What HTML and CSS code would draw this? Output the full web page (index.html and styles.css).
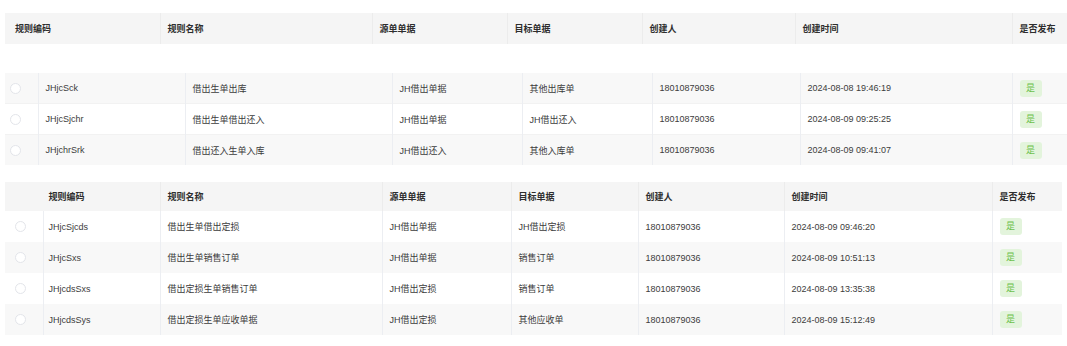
FILE: index.html
```html
<!DOCTYPE html>
<html lang="zh-CN">
<head>
<meta charset="utf-8">
<link rel="stylesheet" href="styles.css">
</head>
<body>
<div class="page">
  <table class="grid head1">
    <colgroup><col class="h1c1"><col class="h1c2"><col class="h1c3"><col class="h1c4"><col class="h1c5"><col class="h1c6"><col class="h1c7"></colgroup>
    <thead><tr><th class="first">规则编码</th><th>规则名称</th><th>源单单据</th><th>目标单据</th><th>创建人</th><th>创建时间</th><th>是否发布</th></tr></thead>
  </table>

  <table class="grid body1">
    <colgroup><col class="b1c0"><col class="b1c1"><col class="b1c2"><col class="b1c3"><col class="b1c4"><col class="b1c5"><col class="b1c6"><col class="b1c7"></colgroup>
    <tbody>
      <tr class="striped"><td class="sel"><span class="radio"></span></td><td>JHjcSck</td><td>借出生单出库</td><td>JH借出单据</td><td>其他出库单</td><td>18010879036</td><td>2024-08-08 19:46:19</td><td><span class="tag">是</span></td></tr>
      <tr><td class="sel"><span class="radio"></span></td><td>JHjcSjchr</td><td>借出生单借出还入</td><td>JH借出单据</td><td>JH借出还入</td><td>18010879036</td><td>2024-08-09 09:25:25</td><td><span class="tag">是</span></td></tr>
      <tr class="striped"><td class="sel"><span class="radio"></span></td><td>JHjchrSrk</td><td>借出还入生单入库</td><td>JH借出还入</td><td>其他入库单</td><td>18010879036</td><td>2024-08-09 09:41:07</td><td><span class="tag">是</span></td></tr>
    </tbody>
  </table>

  <table class="grid t2">
    <colgroup><col class="c0"><col class="c1"><col class="c2"><col class="c3"><col class="c4"><col class="c5"><col class="c6"><col class="c7"></colgroup>
    <thead><tr><th class="sel"></th><th>规则编码</th><th>规则名称</th><th>源单单据</th><th>目标单据</th><th>创建人</th><th>创建时间</th><th>是否发布</th></tr></thead>
    <tbody>
      <tr><td class="sel"><span class="radio"></span></td><td>JHjcSjcds</td><td>借出生单借出定损</td><td>JH借出单据</td><td>JH借出定损</td><td>18010879036</td><td>2024-08-09 09:46:20</td><td><span class="tag">是</span></td></tr>
      <tr class="striped"><td class="sel"><span class="radio"></span></td><td>JHjcSxs</td><td>借出生单销售订单</td><td>JH借出单据</td><td>销售订单</td><td>18010879036</td><td>2024-08-09 10:51:13</td><td><span class="tag">是</span></td></tr>
      <tr><td class="sel"><span class="radio"></span></td><td>JHjcdsSxs</td><td>借出定损生单销售订单</td><td>JH借出定损</td><td>销售订单</td><td>18010879036</td><td>2024-08-09 13:35:38</td><td><span class="tag">是</span></td></tr>
      <tr class="striped"><td class="sel"><span class="radio"></span></td><td>JHjcdsSys</td><td>借出定损生单应收单据</td><td>JH借出定损</td><td>其他应收单</td><td>18010879036</td><td>2024-08-09 15:12:49</td><td><span class="tag">是</span></td></tr>
    </tbody>
  </table>
</div>
</body>
</html>
```

FILE: styles.css
```css
html, body {
  margin: 0;
  padding: 0;
  background: #ffffff;
}

body {
  font-family: "Liberation Sans", "Noto Sans CJK SC", sans-serif;
  font-size: 9px;
  color: #3c3c3c;
}

.page {
  padding: 13px 0 0 5px;
}

.grid {
  border-collapse: collapse;
  table-layout: fixed;
  border-spacing: 0;
}

.grid th,
.grid td {
  padding: 0 0 0 6px;
  text-align: left;
  white-space: nowrap;
  overflow: hidden;
  border-left: 1px solid #eceef2;
}

.grid th:first-child,
.grid td:first-child {
  border-left: none;
}

.grid th {
  background: #f5f5f5;
  font-weight: bold;
  color: #2e2e2e;
  border-left-color: #ececec;
}

/* table 1 header */
.head1 { width: 1062px; margin-bottom: 29px; }
.head1 th { height: 31px; padding-left: 7px; }
.head1 th.first { padding-left: 10px; }
.h1c1 { width: 155px; }
.h1c2 { width: 212px; }
.h1c3 { width: 135px; }
.h1c4 { width: 135px; }
.h1c5 { width: 153px; }
.h1c6 { width: 217px; }
.h1c7 { width: 55px; }

/* table 1 body */
.body1 { width: 1062px; margin-bottom: 17px; }
.body1 td { height: 30px; padding-left: 7px; }
.body1 tr + tr td { border-top: 1px solid #f2f2f2; }
.b1c0 { width: 33px; }
.b1c1 { width: 147px; }
.b1c2 { width: 207px; }
.b1c3 { width: 130px; }
.b1c4 { width: 130px; }
.b1c5 { width: 148px; }
.b1c6 { width: 212px; }
.b1c7 { width: 55px; }
.body1 td.sel { padding-left: 5px; }

/* table 2 */
.t2 { width: 1057px; }
.t2 th { height: 29px; }
.t2 td { height: 31px; }
.t2 th:nth-child(2), .t2 td:nth-child(2) { padding-left: 5px; }
.t2 th:nth-child(n+3), .t2 td:nth-child(n+3) { padding-left: 7px; }
.t2 th.sel { border-left: none; }
.t2 th:nth-child(2) { border-left-color: #f5f5f5; }
.c0 { width: 38px; }
.c1 { width: 117px; }
.c2 { width: 222px; }
.c3 { width: 129px; }
.c4 { width: 127px; }
.c5 { width: 146px; }
.c6 { width: 208px; }
.c7 { width: 70px; }
.t2 td.sel { padding-left: 10px; }

.striped td { background: #f8f8f8; }

.radio {
  display: inline-block;
  box-sizing: border-box;
  width: 11px;
  height: 11px;
  border: 1px solid #e3e5ea;
  border-radius: 50%;
  background: #fff;
  vertical-align: middle;
}

.tag {
  display: inline-block;
  width: 22px;
  height: 17px;
  line-height: 17px;
  text-align: center;
  border-radius: 3px;
  background: #e3f4dc;
  color: #6ac04a;
  font-size: 9px;
  vertical-align: middle;
}
```
